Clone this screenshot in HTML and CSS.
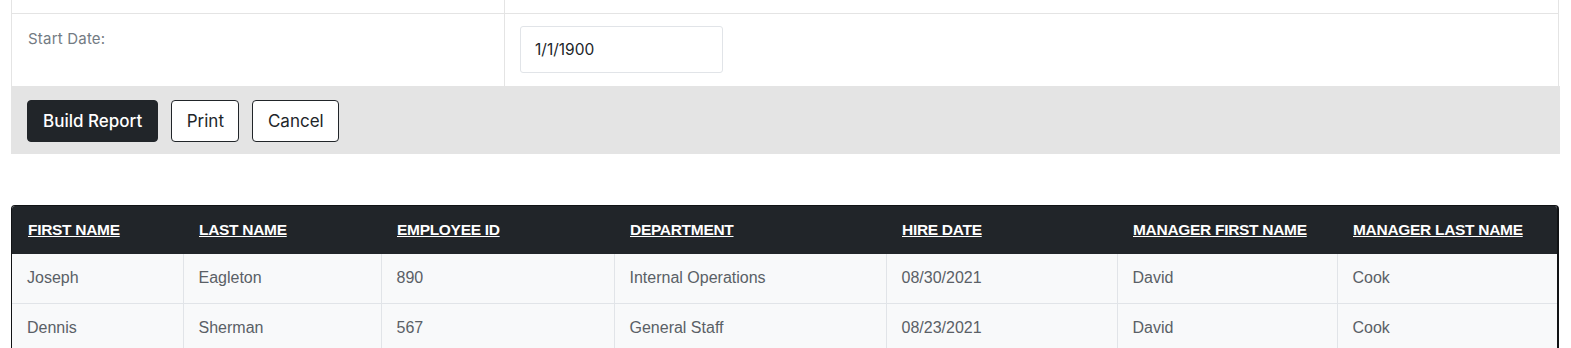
FILE: index.html
```html
<!DOCTYPE html>
<html lang="en">
<head>
<meta charset="utf-8">
<title>Employee Report</title>
<link rel="stylesheet" href="styles.css">
</head>
<body>
<div class="page">
  <div class="form">
    <div class="form-row top-row">
      <div class="label-cell"></div>
      <div class="value-cell"></div>
    </div>
    <div class="form-row date-row">
      <div class="label-cell"><label class="label" for="start">Start Date:</label></div>
      <div class="value-cell"><input id="start" class="date-input" type="text" value="1/1/1900"></div>
    </div>
  </div>
  <div class="actions">
    <button class="btn btn-dark">Build Report</button>
    <button class="btn btn-outline">Print</button>
    <button class="btn btn-outline">Cancel</button>
  </div>

  <div class="table-wrap">
    <table class="report">
      <colgroup>
        <col class="c1"><col class="c2"><col class="c3"><col class="c4"><col class="c5"><col class="c6"><col class="c7">
      </colgroup>
      <thead>
        <tr>
          <th><a href="#">FIRST NAME</a></th>
          <th><a href="#">LAST NAME</a></th>
          <th><a href="#">EMPLOYEE ID</a></th>
          <th><a href="#">DEPARTMENT</a></th>
          <th><a href="#">HIRE DATE</a></th>
          <th><a href="#">MANAGER FIRST NAME</a></th>
          <th><a href="#">MANAGER LAST NAME</a></th>
        </tr>
      </thead>
      <tbody>
        <tr>
          <td>Joseph</td><td>Eagleton</td><td>890</td><td>Internal Operations</td><td>08/30/2021</td><td>David</td><td>Cook</td>
        </tr>
        <tr>
          <td>Dennis</td><td>Sherman</td><td>567</td><td>General Staff</td><td>08/23/2021</td><td>David</td><td>Cook</td>
        </tr>
      </tbody>
    </table>
  </div>
</div>
</body>
</html>
```

FILE: styles.css
```css
* { box-sizing: border-box; }

body {
  margin: 0;
  background: #ffffff;
  font-family: Inter, "Noto Sans", sans-serif;
  color: #212529;
}

.page {
  padding-left: 11px;
  width: 1560px;
}

.form {
  width: 1548px;
  border-left: 1px solid #e4e4e4;
  border-right: 1px solid #e4e4e4;
}

.form-row {
  display: grid;
  grid-template-columns: 493px 1fr;
}

.top-row {
  height: 14px;
  border-bottom: 1px solid #e4e4e4;
}

.date-row {
  height: 72px;
}

.label-cell {
  border-right: 1px solid #e4e4e4;
}

.date-row .label-cell {
  padding: 14px 16px;
}

.label {
  font-size: 15px;
  line-height: 20px;
  color: #737b83;
  letter-spacing: 0.2px;
}

.date-row .value-cell {
  padding: 12px 15px;
}

.date-input {
  width: 203px;
  height: 47px;
  border: 1px solid #e1e4e8;
  border-radius: 3px;
  padding: 0 14px;
  font-family: Inter, "Noto Sans", sans-serif;
  font-size: 15.5px;
  color: #212529;
  background: #fff;
}

.actions {
  width: 1549px;
  height: 68px;
  background: #e4e4e4;
  padding: 14px 16px;
  display: flex;
  gap: 13px;
}

.btn {
  height: 42px;
  padding: 0 15px;
  border-radius: 4px;
  font-family: Inter, "Noto Sans", sans-serif;
  font-size: 17px;
  cursor: pointer;
}

.btn-dark {
  background: #212529;
  color: #fff;
  border: 1px solid #212529;
  font-weight: 500;
}

.btn-outline {
  background: #fff;
  color: #212529;
  border: 1px solid #212529;
  padding: 0 14.5px;
}

.table-wrap {
  margin-top: 51px;
  width: 1548px;
  border: 1px solid #111315;
  border-right-width: 2px;
  border-radius: 4px;
  overflow: hidden;
}

.report {
  width: 100%;
  border-collapse: collapse;
  table-layout: fixed;
  font-family: "Liberation Sans", Arial, sans-serif;
}

.c1 { width: 171px; }
.c2 { width: 198px; }
.c3 { width: 233px; }
.c4 { width: 272px; }
.c5 { width: 231px; }
.c6 { width: 220px; }

.report thead th {
  background: #212529;
  height: 48px;
  text-align: left;
  padding: 0 16px;
  font-size: 15.5px;
  font-weight: 700;
  letter-spacing: -0.3px;
}

.report thead th a {
  color: #ffffff;
  text-decoration: underline;
}

.report tbody td {
  background: #f8f9fa;
  height: 49px;
  padding: 0 15px;
  font-size: 16px;
  color: #5a6066;
  border-left: 1px solid #e1e4e8;
  border-bottom: 1px solid #e1e4e8;
}

.report tbody td:first-child {
  border-left: none;
}
```
